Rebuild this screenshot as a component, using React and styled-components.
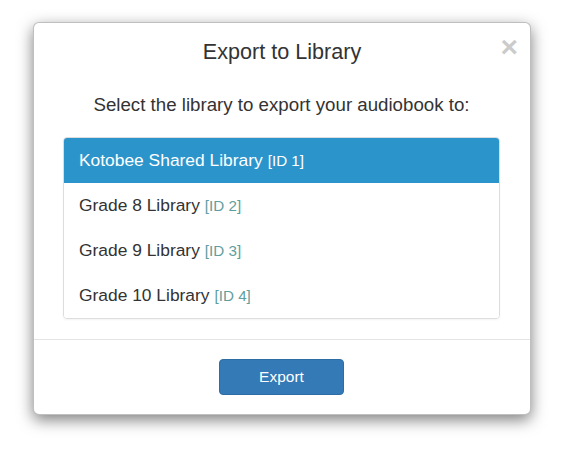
import React from "react";
import styled, { createGlobalStyle } from "styled-components";

const Global = createGlobalStyle`
  html, body { margin: 0; padding: 0; background: #fff; }
  body { font-family: "Liberation Sans", Arial, sans-serif; color: #333; }
  * { box-sizing: border-box; }
`;

const Page = styled.div`
  width: 573px;
  height: 454px;
  padding: 22px 0 0 33px;
`;

const Modal = styled.div`
  position: relative;
  width: 498px;
  background: #fff;
  border: 1px solid rgba(0, 0, 0, 0.25);
  border-radius: 6px;
  box-shadow: 0 5px 15px rgba(0, 0, 0, 0.5);
  display: flex;
  flex-direction: column;
`;

const Header = styled.div`
  padding: 15px 15px 0;
  text-align: center;
`;

const Title = styled.h4`
  margin: 0;
  font-size: 21.6px;
  font-weight: normal;
  line-height: 28px;
  color: #333;
`;

const Close = styled.button`
  position: absolute;
  top: 9px;
  right: 12px;
  border: 0;
  background: transparent;
  padding: 0;
  font-family: "Liberation Sans", Arial, sans-serif;
  font-size: 30px;
  font-weight: bold;
  line-height: 1;
  color: #000;
  opacity: 0.2;
  cursor: pointer;
`;

const Body = styled.div`
  padding: 26px 30px 20px 29px;
  border-bottom: 1px solid #e5e5e5;
`;

const Lead = styled.p`
  margin: 0 0 20px;
  text-align: center;
  font-size: 18.7px;
  line-height: 25px;
  color: #333;
`;

const List = styled.div`
  border: 1px solid #ddd;
  border-radius: 4px;
  overflow: hidden;
  box-shadow: 0 1px 2px rgba(0, 0, 0, 0.05);
`;

const Item = styled.div`
  height: ${(p) => (p.$active ? "46px" : "45px")};
  display: flex;
  align-items: center;
  padding: 0 15px;
  font-size: 17.4px;
  background: ${(p) => (p.$active ? "#2b95cb" : "#fff")};
  color: ${(p) => (p.$active ? "#fff" : "#333")};
  margin-top: ${(p) => (p.$active ? "-1px" : "0")};
`;

const Tag = styled.span`
  font-size: 15.2px;
  margin-left: 5px;
  color: ${(p) => (p.$active ? "#fff" : "#5f9ea0")};
`;

const Footer = styled.div`
  padding: 19px 15px 19px;
  display: flex;
  justify-content: center;
`;

const Button = styled.button`
  width: 125px;
  height: 36px;
  margin-right: 1px;
  background: #337ab7;
  border: 1px solid #2e6da4;
  border-radius: 4px;
  color: #fff;
  font-family: "Liberation Sans", Arial, sans-serif;
  font-size: 15.5px;
  cursor: pointer;
`;

const libs = [
  { name: "Kotobee Shared Library", id: 1 },
  { name: "Grade 8 Library", id: 2 },
  { name: "Grade 9 Library", id: 3 },
  { name: "Grade 10 Library", id: 4 },
];

export default function App() {
  return (
    <>
      <Global />
      <Page>
        <Modal>
          <Close aria-label="Close">×</Close>
          <Header>
            <Title>Export to Library</Title>
          </Header>
          <Body>
            <Lead>Select the library to export your audiobook to:</Lead>
            <List>
              {libs.map((l, i) => (
                <Item key={l.id} $active={i === 0}>
                  {l.name}
                  <Tag $active={i === 0}>[ID {l.id}]</Tag>
                </Item>
              ))}
            </List>
          </Body>
          <Footer>
            <Button>Export</Button>
          </Footer>
        </Modal>
      </Page>
    </>
  );
}
